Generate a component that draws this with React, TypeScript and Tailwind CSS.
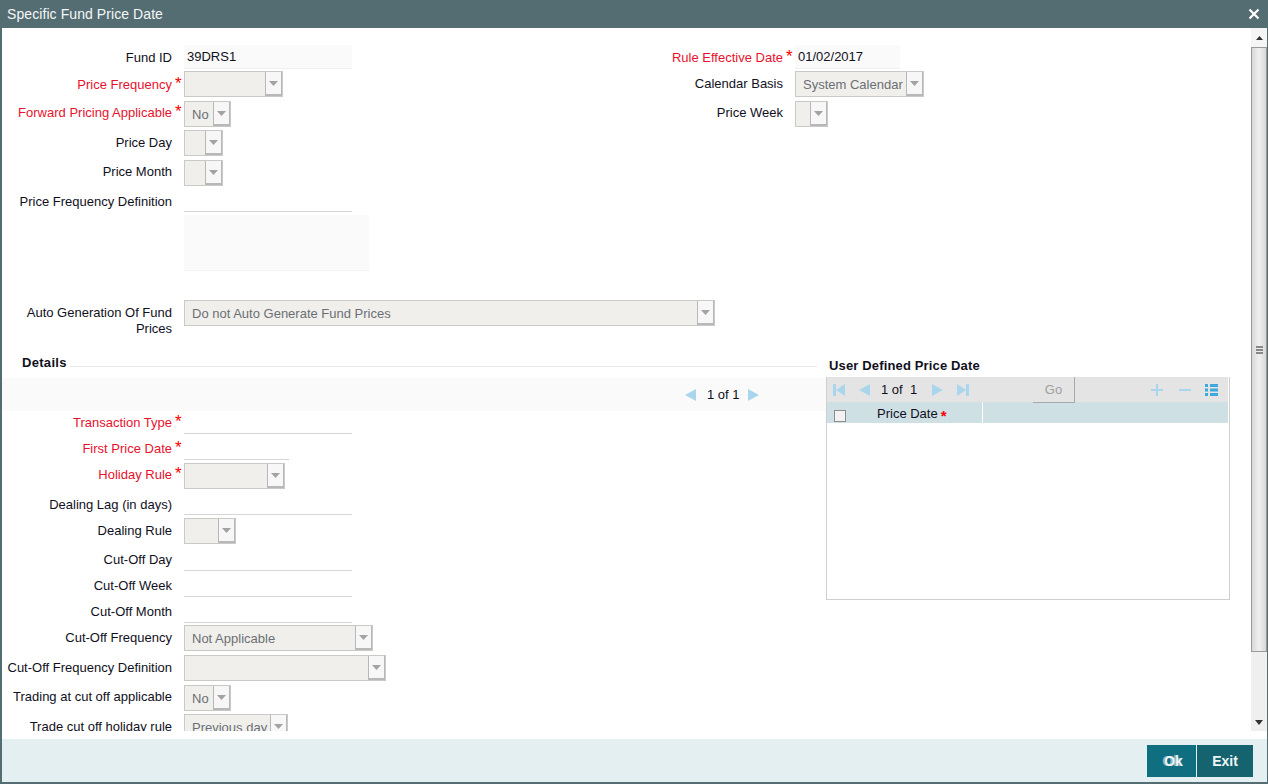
import React from "react";

type RowProps = {
  label: React.ReactNode;
  req?: boolean;
  cls: string;
  labelCls: string;
  children?: React.ReactNode;
};

// label column + star + control, same on every form line
const Row = ({ label, req, cls, labelCls, children }: RowProps) => {
  return (
    <div className={"flex items-start " + cls}>
      <div
        className={
          "w-[170px] shrink-0 whitespace-nowrap text-right leading-[22px] " +
          labelCls +
          (req ? " text-[#e8112d]" : " text-[#10101c]")
        }
      >
        {label}
      </div>
      <div className={"w-[12px] shrink-0 pl-[3px] text-[#f00] text-[17px] leading-[20px] " + labelCls}>
        {req ? "*" : ""}
      </div>
      {children}
    </div>
  );
};

const Select = ({ cls, value }: { cls: string; value?: string }) => {
  return (
    <div className={"flex h-[26px] shrink-0 border border-[#c9c9c5] bg-[#f0efeb] " + cls}>
      <div className="min-w-0 flex-1 overflow-hidden whitespace-nowrap pl-[7px] leading-[25px] text-[#6b6f75]">
        {value}
      </div>
      <div className="flex w-[17px] shrink-0 items-center justify-center border-x border-b-2 border-[#b8b8b8] bg-[#f7f7f7]">
        <svg width="9" height="5" viewBox="0 0 9 5">
          <path d="M0 0h9L4.500 5z" fill="#a3a3a3" />
        </svg>
      </div>
    </div>
  );
};

const Line = ({ cls, value }: { cls: string; value?: string }) => {
  return (
    <div className={"shrink-0 border-b border-[#d6d6d6] pl-[3px] text-[#10101c] " + cls}>{value}</div>
  );
};

const Tri = ({ d }: { d: string }) => {
  return (
    <svg width="12" height="14" viewBox="0 0 12 14" className="shrink-0">
      <path d={d} fill="#a9d6ec" />
    </svg>
  );
};

const left = "M11 1v12L0 7z";
const right = "M1 1v12l11-6z";

export default function App() {
  return (
    <div className="flex h-[784px] w-[1268px] flex-col overflow-hidden bg-[#546d73] font-['Liberation_Sans',Arial,sans-serif] text-[13px]">
      <div className="flex h-[28px] shrink-0 items-center justify-between pl-[7px] pr-[8px] text-[14px] tracking-[0.08px] text-[#f4f7f7]">
        <span>Specific Fund Price Date</span>
        <svg width="12" height="12" viewBox="0 0 12 12">
          <path d="M1.500 1.500l9 9M10.500 1.500l-9 9" stroke="#fff" strokeWidth="2.2" />
        </svg>
      </div>

      <div className="ml-[2px] mr-[1px] flex min-h-0 flex-1 flex-col bg-white">
        <div className="flex h-[703px] shrink-0">
          <div className="min-w-0 flex-1 overflow-hidden pt-[17px]">
            <div className="flex">
              <div className="w-[611px] shrink-0">
                <Row label="Fund ID" cls="h-[23px]" labelCls="pt-[2px]">
                  <Line cls="h-[24px] w-[168px] bg-[#fafafa] leading-[24px] border-[#f0f0f0]" value="39DRS1" />
                </Row>
                <Row label="Price Frequency" req cls="mt-[3px] h-[26px]" labelCls="pt-[3px]">
                  <Select cls="w-[99px]" />
                </Row>
                <Row label="Forward Pricing Applicable" req cls="mt-[4px] h-[26px]" labelCls="pt-[1px]">
                  <Select cls="w-[47px]" value="No" />
                </Row>
                <Row label="Price Day" cls="mt-[3px] h-[26px]" labelCls="pt-[2px]">
                  <Select cls="w-[39px]" />
                </Row>
                <Row label="Price Month" cls="mt-[4px] h-[26px]" labelCls="pt-[1px]">
                  <Select cls="w-[39px]" />
                </Row>
                <Row label="Price Frequency Definition" cls="mt-[4px] h-[22px]" labelCls="pt-[1px]">
                  <Line cls="h-[22px] w-[168px]" />
                </Row>
                <div className="ml-[182px] mt-[3px] h-[56px] w-[185px] border-b border-[#f4f4f4] bg-[#fafafa]" />
              </div>
              <div>
                <Row label="Rule Effective Date" req cls="h-[23px]" labelCls="pt-[2px]">
                  <Line
                    cls="h-[24px] w-[105px] bg-[#fafafa] leading-[24px] border-[#f0f0f0]"
                    value="01/02/2017"
                  />
                </Row>
                <Row label="Calendar Basis" cls="mt-[3px] h-[26px]" labelCls="pt-[2px]">
                  <Select cls="w-[129px]" value="System Calendar" />
                </Row>
                <Row label="Price Week" cls="mt-[4px] h-[26px]" labelCls="pt-[1px]">
                  <Select cls="w-[33px]" />
                </Row>
              </div>
            </div>

            <Row
              label={
                <span className="block leading-[16px]">
                  Auto Generation Of Fund
                  <br />
                  Prices
                </span>
              }
              cls="mt-[29px] h-[52px]"
              labelCls="pt-[5px]"
            >
              <Select cls="w-[531px]" value="Do not Auto Generate Fund Prices" />
            </Row>

            <div className="flex">
              <div className="w-[824px] shrink-0">
                <div className="flex h-[26px] items-start pl-[20px] pr-[9px]">
                  <span className="font-bold leading-[22px] tracking-[0.3px] text-[#10101c]">Details</span>
                  <div className="ml-[3px] h-[15px] flex-1 border-b border-[#e8e8e8]" />
                </div>
                <div className="flex h-[33px] items-center bg-[#fafafa] pl-[683px] text-[#10101c]">
                  <Tri d={left} />
                  <span className="ml-[10px] w-[40px] whitespace-nowrap">1 of 1</span>
                  <Tri d={right} />
                </div>

                <Row label="Transaction Type" req cls="h-[23px]" labelCls="pt-[1px]">
                  <Line cls="h-[23px] w-[168px]" />
                </Row>
                <Row label="First Price Date" req cls="h-[26px]" labelCls="pt-[4px]">
                  <Line cls="h-[26px] w-[105px]" />
                </Row>
                <Row label="Holiday Rule" req cls="mt-[3px] h-[26px]" labelCls="pt-[1px]">
                  <Select cls="w-[101px]" />
                </Row>
                <Row label="Dealing Lag (in days)" cls="h-[26px]" labelCls="pt-[5px]">
                  <Line cls="h-[26px] w-[168px]" />
                </Row>
                <Row label="Dealing Rule" cls="mt-[3px] h-[26px]" labelCls="pt-[2px]">
                  <Select cls="w-[52px]" />
                </Row>
                <Row label="Cut-Off Day" cls="h-[27px]" labelCls="pt-[5px]">
                  <Line cls="h-[27px] w-[168px]" />
                </Row>
                <Row label="Cut-Off Week" cls="h-[26px]" labelCls="pt-[4px]">
                  <Line cls="h-[26px] w-[168px]" />
                </Row>
                <Row label="Cut-Off Month" cls="h-[26px]" labelCls="pt-[4px]">
                  <Line cls="h-[26px] w-[168px]" />
                </Row>
                <Row label="Cut-Off Frequency" cls="mt-[2px] h-[26px]" labelCls="pt-[2px]">
                  <Select cls="w-[189px]" value="Not Applicable" />
                </Row>
                <Row label="Cut-Off Frequency Definition" cls="mt-[4px] h-[26px]" labelCls="pt-[2px]">
                  <Select cls="w-[202px]" />
                </Row>
                <Row label="Trading at cut off applicable" cls="mt-[4px] h-[26px]" labelCls="pt-[1px]">
                  <Select cls="w-[47px]" value="No" />
                </Row>
                <Row label="Trade cut off holiday rule" cls="mt-[3px] h-[26px]" labelCls="pt-[2px]">
                  <Select cls="w-[104px]" value="Previous day" />
                </Row>
              </div>

              <div className="w-[404px] shrink-0 pt-[3px]">
                <div className="pl-[3px] font-bold leading-[22px] tracking-[0.15px] text-[#10101c]">
                  User Defined Price Date
                </div>
                <div className="h-[223px] border-x border-b border-[#cfcfcf]">
                  <div className="mr-[1px] flex h-[25px] items-center bg-[#e4e4e4] pl-[6px] pr-[9px] text-[#10101c]">
                    <Tri d="M0 1h3v12H0zM12 1v12L3 7z" />
                    <span className="w-[14px] shrink-0" />
                    <Tri d={left} />
                    <span className="ml-[10px] w-[35px] whitespace-nowrap">1 of&nbsp; 1</span>
                    <span className="w-[15px] shrink-0" />
                    <Tri d={right} />
                    <span className="w-[14px] shrink-0" />
                    <Tri d="M0 1v12l9-6zM9 1h3v12H9z" />
                    <div className="ml-[64px] flex h-[26px] w-[42px] items-center justify-center self-start border-b border-r border-[#a8a8a8] text-[#a0a0a0]">
                      Go
                    </div>
                    <div className="flex-1" />
                    <svg width="12" height="12" viewBox="0 0 12 12" className="mr-[16px]">
                      <path d="M5 0h2v5h5v2H7v5H5V7H0V5h5z" fill="#a9d6ec" />
                    </svg>
                    <svg width="12" height="12" viewBox="0 0 12 12" className="mr-[10px]">
                      <path d="M0 5h12v2H0z" fill="#a9d6ec" />
                    </svg>
                    <svg width="14" height="12" viewBox="0 0 14 12" className="ml-[4px]">
                      <path
                        d="M0 0h3v3H0zM5 0h8v3H5zM0 4.500h3v3H0zM5 4.500h8v3H5zM0 9h3v3H0zM5 9h8v3H5z"
                        fill="#3fa8dd"
                      />
                    </svg>
                  </div>
                  <div className="mr-[1px] flex h-[21px] bg-[#cfe0e5] text-[#10101c]">
                    <div className="flex w-[156px] border-r border-white">
                      <div className="ml-[7px] mt-[8px] h-[12px] w-[12px] border border-[#8d8d8d] bg-[#f2f2f2]" />
                      <span className="ml-[31px] leading-[23px]">Price Date</span>
                      <span className="ml-[3px] text-[15px] font-bold leading-[27px] text-[#f00]">*</span>
                    </div>
                  </div>
                </div>
              </div>
            </div>
          </div>

          <div className="flex w-[16px] shrink-0 flex-col bg-[#efefef]">
            <div className="flex h-[19px] shrink-0 items-center justify-center bg-[#f5f5f5]">
              <svg width="7" height="4" viewBox="0 0 7 4">
                <path d="M3.500 0L7 4H0z" fill="#333" />
              </svg>
            </div>
            <div className="flex h-[605px] shrink-0 flex-col items-center justify-center gap-[1px] border border-[#9a9a9a] bg-gradient-to-r from-[#d8d8d8] via-[#f0f0f0] to-[#d8d8d8]">
              <div className="h-[2px] w-[7px] bg-[#888]" />
              <div className="h-[2px] w-[7px] bg-[#888]" />
              <div className="h-[2px] w-[7px] bg-[#888]" />
            </div>
            <div className="flex-1" />
            <div className="flex h-[18px] shrink-0 items-center justify-center">
              <svg width="8" height="5" viewBox="0 0 8 5">
                <path d="M0 0h8L4 5z" fill="#333" />
              </svg>
            </div>
          </div>
        </div>

        <div className="h-[8px] shrink-0" />

        <div className="flex min-h-0 flex-1 items-start justify-end gap-[1px] bg-[#e4eff2] pr-[14px] pt-[6px]">
          <div className="flex h-[32px] w-[49px] items-center justify-center bg-[#0f6f80] pl-[4px] text-[14px] font-bold text-[#eef5f6] [text-shadow:-2px_0_0_#8fb4bc]">
            Ok
          </div>
          <div className="flex h-[32px] w-[56px] items-center justify-center bg-[#15636f] text-[14px] font-bold text-[#eef5f6]">
            Exit
          </div>
        </div>
      </div>
      <div className="h-[2px] shrink-0" />
    </div>
  );
}
